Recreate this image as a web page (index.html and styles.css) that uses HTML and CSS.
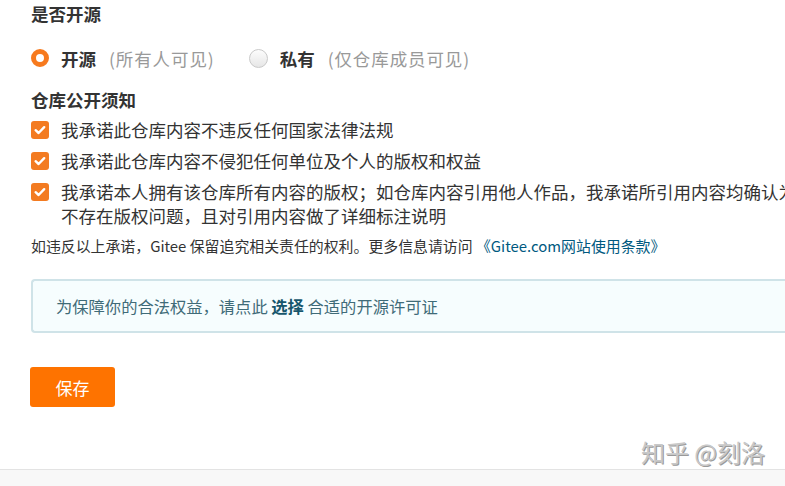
FILE: index.html
```html
<!DOCTYPE html>
<html lang="zh-CN">
<head>
<meta charset="utf-8">
<link rel="stylesheet" href="styles.css">
</head>
<body>
<div class="page">
  <div class="form">
    <div class="heading">是否开源</div>
    <div class="radio-row">
      <label class="radio">
        <span class="radio-dot on"></span>
        <span class="radio-label">开源</span>
        <span class="radio-hint">(所有人可见)</span>
      </label>
      <label class="radio">
        <span class="radio-dot off"></span>
        <span class="radio-label">私有</span>
        <span class="radio-hint">(仅仓库成员可见)</span>
      </label>
    </div>
    <div class="heading">仓库公开须知</div>
    <ul class="checks">
      <li class="check">
        <span class="box-icon"><svg viewBox="0 0 18 18" width="18" height="18"><path d="M4.6 9.2 L7.6 12 L13.2 6.2" fill="none" stroke="#fff" stroke-width="2.4" stroke-linecap="round" stroke-linejoin="round"/></svg></span>
        <span class="check-text">我承诺此仓库内容不违反任何国家法律法规</span>
      </li>
      <li class="check">
        <span class="box-icon"><svg viewBox="0 0 18 18" width="18" height="18"><path d="M4.6 9.2 L7.6 12 L13.2 6.2" fill="none" stroke="#fff" stroke-width="2.4" stroke-linecap="round" stroke-linejoin="round"/></svg></span>
        <span class="check-text">我承诺此仓库内容不侵犯任何单位及个人的版权和权益</span>
      </li>
      <li class="check">
        <span class="box-icon"><svg viewBox="0 0 18 18" width="18" height="18"><path d="M4.6 9.2 L7.6 12 L13.2 6.2" fill="none" stroke="#fff" stroke-width="2.4" stroke-linecap="round" stroke-linejoin="round"/></svg></span>
        <span class="check-text">我承诺本人拥有该仓库所有内容的版权；如仓库内容引用他人作品，我承诺所引用内容均确认为<br>不存在版权问题，且对引用内容做了详细标注说明</span>
      </li>
    </ul>
    <div class="note">如违反以上承诺，Gitee 保留追究相关责任的权利。更多信息请访问 <a class="note-link">《Gitee.com网站使用条款》</a></div>
    <div class="license-box">为保障你的合法权益，请点此 <b class="license-link">选择</b> 合适的开源许可证</div>
    <button class="save">保存</button>
  </div>
  <div class="footer"></div>
  <div class="watermark">知乎 @刻洛</div>
</div>
</body>
</html>
```

FILE: styles.css
```css
* { box-sizing: border-box; }
html, body { margin: 0; padding: 0; }
body {
  font-family: "Noto Sans CJK SC", "Noto Sans", sans-serif;
  color: #333;
  background: #fff;
  width: 785px;
  height: 486px;
  overflow: hidden;
}
.page { position: relative; height: 486px; overflow: hidden; }
.form { padding-left: 31px; }
.heading {
  font-size: 17.5px;
  font-weight: 700;
  line-height: 28px;
  color: #333;
}
.radio-row {
  display: flex;
  align-items: center;
  height: 28px;
  margin: 16px 0 14px;
  white-space: nowrap;
}
.radio {
  display: flex;
  align-items: center;
  margin-right: 34px;
  font-size: 17.5px;
}
.radio-dot {
  width: 18px;
  height: 18px;
  border-radius: 50%;
  margin-right: 12px;
  flex: none;
}
.radio-dot.on {
  border: 5.5px solid #f77a1e;
  background: #fff;
}
.radio-dot.off {
  border: 1px solid #c9c9c9;
  background: linear-gradient(#fdfdfd, #e6e6e6);
  width: 19px;
  height: 19px;
}
.radio-label { font-weight: 700; color: #333; margin-right: 13px; }
.radio-hint { color: #999; letter-spacing: 0.9px; }
.checks {
  list-style: none;
  margin: 4px 0 0;
  padding: 0;
  display: flex;
  flex-direction: column;
  gap: 7px;
}
.check {
  display: flex;
  align-items: flex-start;
  font-size: 17.5px;
  line-height: 24px;
  white-space: nowrap;
}
.box-icon {
  width: 18px;
  height: 18px;
  margin-top: 3px;
  margin-right: 12px;
  background: #f37b21;
  border-radius: 3px;
  flex: none;
  display: flex;
}
.note {
  margin-top: 8px;
  font-size: 14.9px;
  line-height: 20px;
  color: #333;
  white-space: nowrap;
}
.note-link { color: #005980; }
.license-box {
  margin-top: 23px;
  height: 54px;
  border: 2px solid #cfe3e8;
  border-right: none;
  border-radius: 4px 0 0 4px;
  background: #f6fdfe;
  padding-left: 23px;
  display: flex;
  align-items: center;
  font-size: 16.3px;
  color: #3f6b78;
  white-space: pre;
}
.license-link { color: #16566c; font-weight: 700; }
.save {
  display: block;
  margin-top: 34px;
  width: 85px;
  height: 40px;
  border: none;
  border-radius: 3px;
  background: #fe7300;
  color: #fff;
  font-family: inherit;
  font-size: 17px;
  margin-left: -1px;
}
.footer {
  position: absolute;
  left: 0;
  right: 0;
  bottom: 0;
  height: 17px;
  border-top: 1px solid #e3e3e3;
  background: #f8f8f8;
}
.watermark {
  position: absolute;
  right: 20px;
  top: 437px;
  font-size: 24px;
  line-height: 30px;
  color: #c8c8c8;
  text-shadow: 1px 1px 0 #9a9a9a, -1px -1px 0 #fff;
}
```
